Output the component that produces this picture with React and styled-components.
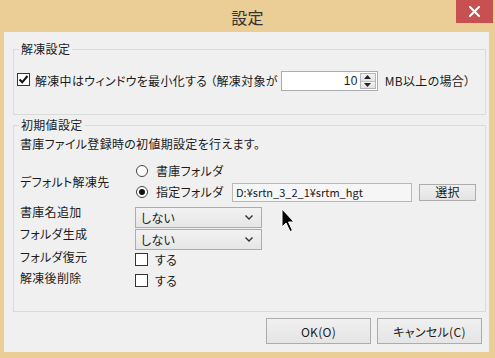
import React from 'react';
import styled, { createGlobalStyle } from 'styled-components';

const GlobalStyle = createGlobalStyle`
  html, body { margin: 0; padding: 0; background: #ffffff; }
  body {
    font-family: "Noto Sans CJK JP", "Noto Sans", sans-serif;
    font-feature-settings: "palt" 1;
  }
`;

function App() {
    return (
        <>
            <GlobalStyle />
            <Window>
                <TitleBar>
                    <span />
                    <Title>設定</Title>
                    <CloseButton>
                        <svg width="11" height="11" viewBox="0 0 11 11">
                            <path d="M1 1 L10 10 M10 1 L1 10" stroke="#fff" strokeWidth="2" strokeLinecap="square" />
                        </svg>
                    </CloseButton>
                </TitleBar>
                <Frame>
                    <Body>
                        <Group $pb={23}>
                            <Legend>解凍設定</Legend>
                            <MinimizeRow>
                                <CheckBox checked />
                                <Text>解凍中はウィンドウを最小化する （解凍対象が</Text>
                                <NumberBox>
                                    <NumberValue>10</NumberValue>
                                    <Spin>
                                        <SpinButton><Arrow up /></SpinButton>
                                        <SpinButton><Arrow /></SpinButton>
                                    </Spin>
                                </NumberBox>
                                <Unit>MB以上の場合）</Unit>
                            </MinimizeRow>
                        </Group>

                        <Group $pb={24} $mt={3}>
                            <Legend>初期値設定</Legend>
                            <Description>書庫ファイル登録時の初値期設定を行えます。</Description>

                            <DefaultBlock>
                                <BlockLabel>デフォルト解凍先</BlockLabel>
                                <RadioStack>
                                    <RadioRow $h={18}>
                                        <Radio />
                                        <Text>書庫フォルダ</Text>
                                    </RadioRow>
                                    <RadioRow $h={20}>
                                        <Radio checked />
                                        <RadioText>指定フォルダ</RadioText>
                                        <PathInput>D:¥srtn_3_2_1¥srtm_hgt</PathInput>
                                        <BrowseButton>選択</BrowseButton>
                                    </RadioRow>
                                </RadioStack>
                            </DefaultBlock>

                            <SelectRow $mt={4}>
                                <FieldLabel>書庫名追加</FieldLabel>
                                <Select value="しない" />
                            </SelectRow>
                            <SelectRow>
                                <FieldLabel>フォルダ生成</FieldLabel>
                                <Select value="しない" />
                            </SelectRow>
                            <OptionRow $mt={1}>
                                <FieldLabel>フォルダ復元</FieldLabel>
                                <OptionBox />
                                <Text>する</Text>
                            </OptionRow>
                            <OptionRow $mt={6}>
                                <FieldLabel>解凍後削除</FieldLabel>
                                <OptionBox />
                                <Text>する</Text>
                            </OptionRow>
                        </Group>

                        <ButtonRow>
                            <DialogButton>OK(O)</DialogButton>
                            <DialogButton>キャンセル(C)</DialogButton>
                        </ButtonRow>
                    </Body>
                </Frame>
                <Cursor width="14" height="25" viewBox="0 0 14 25">
                    <path d="M1 1 L1 19 L5 15 L9 23.5 L11.5 22.5 L7.5 14 L13 14 Z" fill="#000" stroke="#fff" strokeWidth="1" strokeLinejoin="round" />
                </Cursor>
            </Window>
        </>
    );
}

function CheckBox({ checked }) {
    return (
        <Box $mt={-4}>
            {checked && (
                <svg width="11" height="11" viewBox="0 0 11 11">
                    <path d="M1.5 5.5 L4.2 8.3 L9.5 2" fill="none" stroke="#111" strokeWidth="2" />
                </svg>
            )}
        </Box>
    );
}

function OptionBox() {
    return <Box $mt={2} $mr={7} />;
}

function Radio({ checked }) {
    return <RadioCircle>{checked && <RadioDot />}</RadioCircle>;
}

function Arrow({ up }) {
    return (
        <svg width="7" height="4" viewBox="0 0 7 4">
            <path d={up ? "M0 4 L3.5 0 L7 4 Z" : "M0 0 L3.5 4 L7 0 Z"} fill="#222" />
        </svg>
    );
}

function Select({ value }) {
    return (
        <SelectBox>
            <span>{value}</span>
            <svg width="8" height="5" viewBox="0 0 8 5">
                <path d="M0.5 0.5 L4 4 L7.5 0.5" fill="none" stroke="#333" strokeWidth="1.4" />
            </svg>
        </SelectBox>
    );
}

export default App;

const Window = styled.div`
  position: relative;
  width: 495px;
  height: 358px;
  background: #ebcd96;
  display: flex;
  flex-direction: column;
  overflow: hidden;
  color: #1b1b1b;
  font-size: 12px;
  letter-spacing: 0.3px;
`;

const TitleBar = styled.div`
  height: 32px;
  flex: none;
  display: grid;
  grid-template-columns: 1fr auto 1fr;
  align-items: center;
`;

const Title = styled.span`
  font-size: 16px;
  line-height: 20px;
  color: #333;
  margin-top: 2px;
`;

const CloseButton = styled.div`
  justify-self: end;
  align-self: start;
  width: 37px;
  height: 23px;
  margin-right: 2px;
  background: #c75050;
  display: flex;
  align-items: center;
  justify-content: center;
`;

const Frame = styled.div`
  flex: 1;
  display: flex;
  padding: 0 6px 6px 4px;
`;

const Body = styled.div`
  flex: 1;
  background: #f0f0f0;
  padding: 10px 3px 0 9px;
  display: flex;
  flex-direction: column;
`;

const Group = styled.fieldset`
  margin: ${p => p.$mt || 0}px 0 0 0;
  border: 1px solid #dadada;
  padding: 0 3px ${p => p.$pb}px 3px;
  min-width: 0;
`;

const Legend = styled.legend`
  margin-left: 2px;
  padding: 0 2px;
  font-size: 12px;
  line-height: 14px;
  color: #222;
`;

const Text = styled.span`
  line-height: 12px;
  white-space: nowrap;
`;

const MinimizeRow = styled.div`
  margin-top: 15px;
  height: 20px;
  display: flex;
  align-items: center;
  gap: 5px;
`;

const Box = styled.span`
  width: 13px;
  height: 13px;
  box-sizing: border-box;
  flex: none;
  border: 1px solid #333;
  background: #fff;
  display: flex;
  align-items: center;
  justify-content: center;
  margin-top: ${p => p.$mt || 0}px;
  margin-right: ${p => p.$mr || 0}px;
`;

const NumberBox = styled.div`
  width: 97px;
  height: 20px;
  box-sizing: border-box;
  margin-left: -2px;
  border: 1px solid #abadb3;
  background: #fff;
  display: flex;
  align-items: center;
  justify-content: flex-end;
  padding-right: 1px;
`;

const NumberValue = styled.span`
  font-family: "Liberation Sans Narrow", "Liberation Sans", sans-serif;
  font-size: 12px;
  margin-right: 2px;
`;

const Spin = styled.div`
  width: 16px;
  height: 16px;
  display: flex;
  flex-direction: column;
  border: 1px solid #b5b5b5;
  box-sizing: border-box;
`;

const SpinButton = styled.div`
  flex: 1;
  display: flex;
  align-items: center;
  justify-content: center;
  background: linear-gradient(#f4f4f4, #e2e2e2);
  & + & { border-top: 1px solid #c2c2c2; }
`;

const Unit = styled(Text)`
  margin-left: 2px;
`;

const Description = styled.div`
  margin-top: 5px;
  padding-left: 3px;
  line-height: 14px;
`;

const DefaultBlock = styled.div`
  margin-top: 11px;
  padding-left: 3px;
  display: flex;
  align-items: center;
`;

const BlockLabel = styled.span`
  width: 115px;
  flex: none;
  line-height: 12px;
`;

const RadioStack = styled.div`
  display: flex;
  flex-direction: column;
  gap: 2px;
`;

const RadioRow = styled.div`
  height: ${p => p.$h}px;
  display: flex;
  align-items: center;
`;

const RadioCircle = styled.span`
  width: 12px;
  height: 12px;
  box-sizing: border-box;
  margin: 0 8px 0 1px;
  border: 1px solid #444;
  border-radius: 50%;
  background: #fff;
  display: flex;
  align-items: center;
  justify-content: center;
`;

const RadioDot = styled.span`
  width: 6px;
  height: 6px;
  border-radius: 50%;
  background: #111;
`;

const RadioText = styled(Text)`
  width: 76px;
`;

const PathInput = styled.div`
  width: 180px;
  height: 19px;
  box-sizing: border-box;
  border: 1px solid #b8b8b8;
  background: #f6f6f6;
  padding-left: 3px;
  font-size: 11px;
  line-height: 17px;
  letter-spacing: 0;
  white-space: nowrap;
`;

const BrowseButton = styled.div`
  width: 57px;
  height: 17px;
  box-sizing: border-box;
  margin-left: 7px;
  border: 1px solid #acacac;
  background: linear-gradient(#f0f0f0, #e3e3e3);
  display: flex;
  align-items: center;
  justify-content: center;
  line-height: 12px;
`;

const SelectRow = styled.div`
  margin-top: ${p => p.$mt || 0}px;
  padding-left: 3px;
  height: 22px;
  display: flex;
  align-items: flex-start;
`;

const FieldLabel = styled.span`
  width: 115px;
  flex: none;
  line-height: 12px;
`;

const SelectBox = styled.div`
  width: 127px;
  height: 21px;
  margin-top: 1px;
  box-sizing: border-box;
  border: 1px solid #acacac;
  background: linear-gradient(#f2f2f2, #e6e6e6);
  display: flex;
  align-items: center;
  justify-content: space-between;
  padding: 0 8px 0 5px;
  line-height: 12px;
`;

const OptionRow = styled.div`
  margin-top: ${p => p.$mt || 0}px;
  padding-left: 3px;
  display: flex;
  align-items: flex-start;
  & > span:last-child { margin-top: 3px; }
`;

const ButtonRow = styled.div`
  margin-top: 6px;
  padding-right: 4px;
  display: flex;
  justify-content: flex-end;
  gap: 6px;
`;

const DialogButton = styled.div`
  width: 105px;
  height: 26px;
  box-sizing: border-box;
  border: 1px solid #acacac;
  background: linear-gradient(#f0f0f0, #e5e5e5);
  display: flex;
  align-items: center;
  justify-content: center;
  font-size: 12px;
`;

const Cursor = styled.svg`
  position: absolute;
  left: 281px;
  top: 208px;
`;
